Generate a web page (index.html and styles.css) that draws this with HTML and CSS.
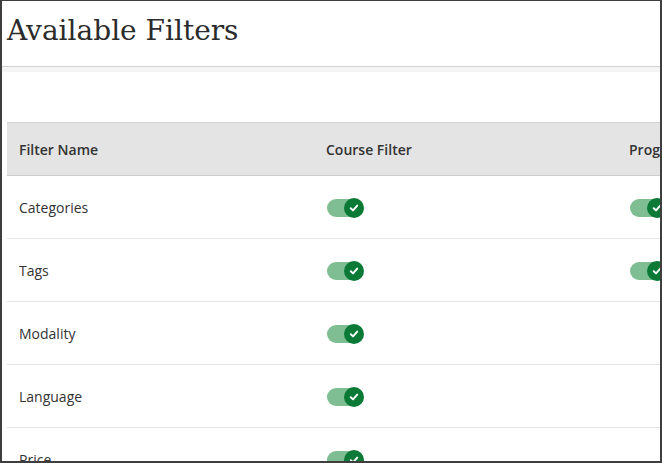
FILE: index.html
```html
<!DOCTYPE html>
<html lang="en">
<head>
  <meta charset="UTF-8" />
  <meta name="viewport" content="width=device-width, initial-scale=1.0"/>
  <title>Available Filters</title>
  <link rel="stylesheet" href="styles.css">
</head>
<body>
  <div class="frame">
    <header class="page-head">
      <h1>Available Filters</h1>
    </header>

    <div class="filters">
      <div class="row head">
        <div class="cell">Filter Name</div>
        <div class="cell">Course Filter</div>
        <div class="cell">Program Filter</div>
      </div>
      <div class="row">
        <div class="cell">Categories</div>
        <div class="cell"><span class="toggle"><span class="knob"><svg viewBox="0 0 10 10"><path d="M2.3 5.2 4.2 7 7.7 3"/></svg></span></span></div>
        <div class="cell"><span class="toggle"><span class="knob"><svg viewBox="0 0 10 10"><path d="M2.3 5.2 4.2 7 7.7 3"/></svg></span></span></div>
      </div>
      <div class="row">
        <div class="cell">Tags</div>
        <div class="cell"><span class="toggle"><span class="knob"><svg viewBox="0 0 10 10"><path d="M2.3 5.2 4.2 7 7.7 3"/></svg></span></span></div>
        <div class="cell"><span class="toggle"><span class="knob"><svg viewBox="0 0 10 10"><path d="M2.3 5.2 4.2 7 7.7 3"/></svg></span></span></div>
      </div>
      <div class="row">
        <div class="cell">Modality</div>
        <div class="cell"><span class="toggle"><span class="knob"><svg viewBox="0 0 10 10"><path d="M2.3 5.2 4.2 7 7.7 3"/></svg></span></span></div>
        <div class="cell"></div>
      </div>
      <div class="row">
        <div class="cell">Language</div>
        <div class="cell"><span class="toggle"><span class="knob"><svg viewBox="0 0 10 10"><path d="M2.3 5.2 4.2 7 7.7 3"/></svg></span></span></div>
        <div class="cell"></div>
      </div>
      <div class="row">
        <div class="cell">Price</div>
        <div class="cell"><span class="toggle"><span class="knob"><svg viewBox="0 0 10 10"><path d="M2.3 5.2 4.2 7 7.7 3"/></svg></span></span></div>
        <div class="cell"></div>
      </div>
    </div>
  </div>
</body>
</html>
```

FILE: styles.css
```css
html, body {
  margin: 0;
  background: #fff;
}

.frame {
  box-sizing: border-box;
  width: 662px;
  height: 463px;
  border: 2px solid #3e3e3e;
  border-top-width: 1px;
  overflow: hidden;
  font-family: "Open Sans", Arial, sans-serif;
  color: #333;
}

.page-head {
  box-sizing: border-box;
  height: 66px;
  padding: 4px 0 0 5px;
  border-bottom: 1px solid #cfcfcf;
  box-shadow: 0 5px 0 #f4f4f4;
}

.page-head h1 {
  margin: 0;
  font-family: "DejaVu Serif", "Liberation Serif", serif;
  font-weight: normal;
  font-size: 28px;
  line-height: 51px;
  color: #2b2b2b;
}

.filters {
  margin: 55px 0 0 5px;
  width: 960px;
}

.row {
  display: grid;
  grid-template-columns: 307px 303px 303px;
  height: 62px;
  border-bottom: 1px solid #e6e6e6;
  align-items: center;
  font-size: 14px;
}

.row.head {
  height: 52px;
  background: #e4e4e4;
  border-top: 1px solid #d2d2d2;
  border-bottom: 1px solid #cdcdcd;
  font-weight: 600;
}

.cell {
  padding-left: 12px;
}

.toggle {
  display: inline-flex;
  align-items: center;
  justify-content: flex-end;
  width: 36px;
  height: 18px;
  margin-left: 1px;
  border-radius: 9px;
  background: #7fbe93;
  vertical-align: middle;
}

.knob {
  display: flex;
  align-items: center;
  justify-content: center;
  width: 20px;
  height: 20px;
  margin-right: -1px;
  border-radius: 50%;
  background: #0a7a36;
}

.knob svg {
  width: 12px;
  height: 12px;
  fill: none;
  stroke: #fff;
  stroke-width: 1.6;
  stroke-linecap: round;
  stroke-linejoin: round;
}
```
